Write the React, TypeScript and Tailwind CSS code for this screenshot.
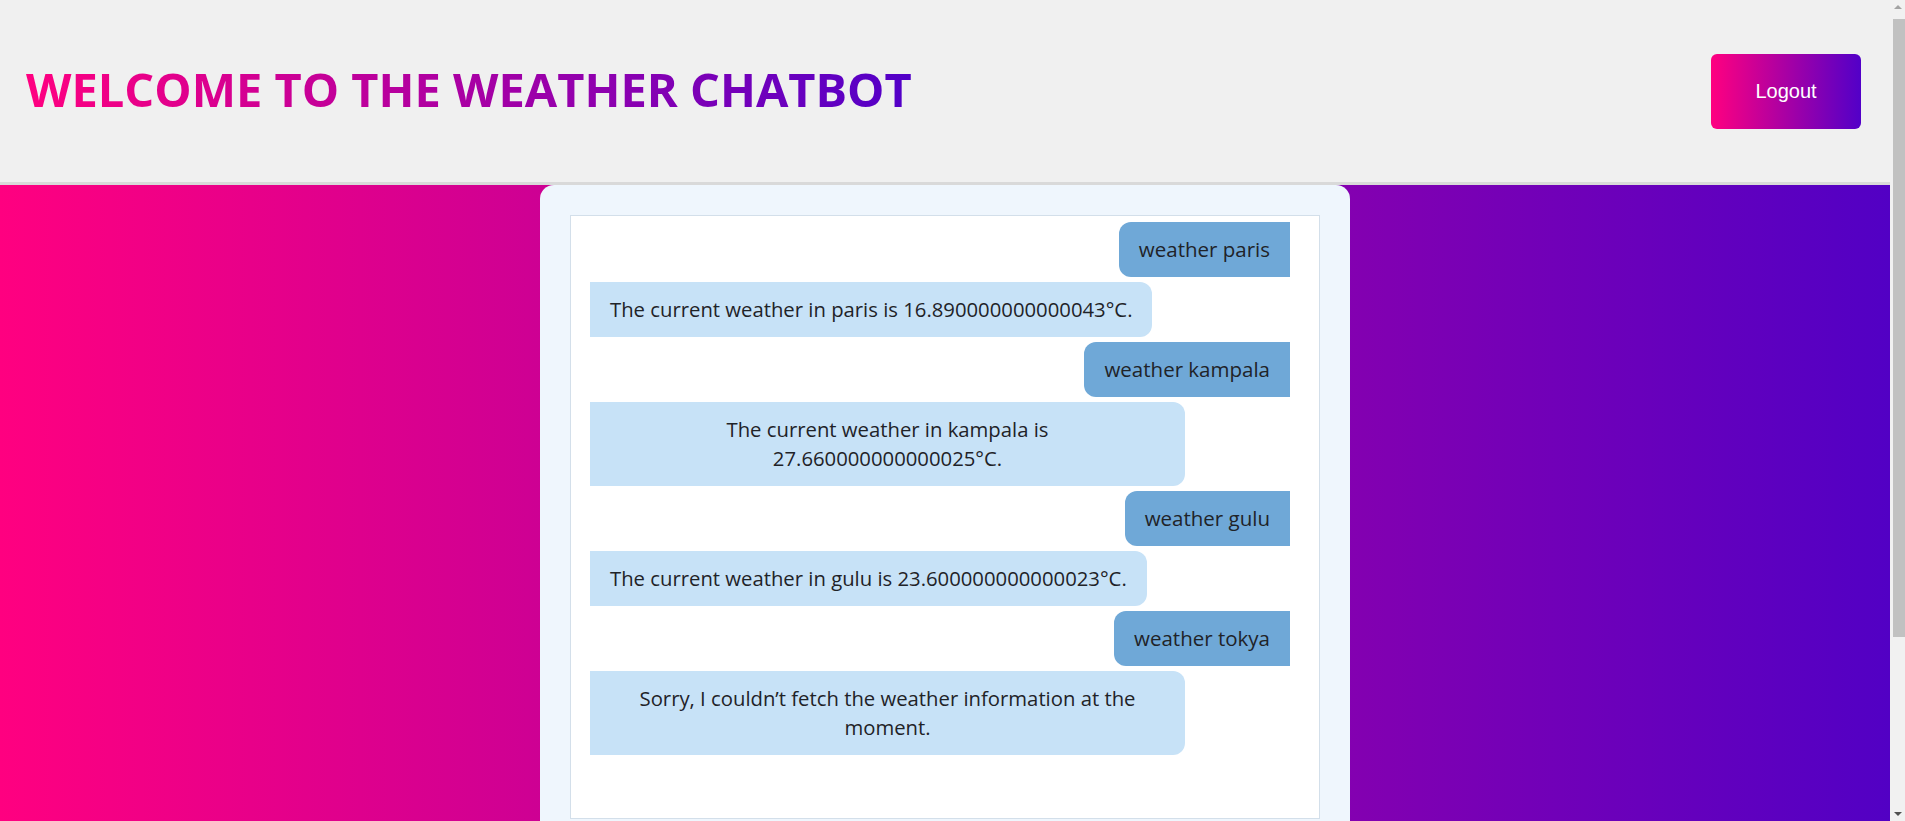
import React from "react";

type Msg = { from: "user" | "bot"; text: string };

const messages: Msg[] = [
  { from: "user", text: "weather paris" },
  { from: "bot", text: "The current weather in paris is 16.890000000000043°C." },
  { from: "user", text: "weather kampala" },
  { from: "bot", text: "The current weather in kampala is 27.660000000000025°C." },
  { from: "user", text: "weather gulu" },
  { from: "bot", text: "The current weather in gulu is 23.600000000000023°C." },
  { from: "user", text: "weather tokya" },
  { from: "bot", text: "Sorry, I couldn’t fetch the weather information at the moment." },
];

function Bubble({ msg }: { msg: Msg }) {
  if (msg.from === "user") {
    return (
      <div className="flex justify-end">
        <p className="my-[2.5px] rounded-l-[12px] bg-[#6fa8d7] px-[20px] py-[13px] text-[20.5px] leading-[29px] text-[#1f2328]">
          {msg.text}
        </p>
      </div>
    );
  }
  return (
    <div className="flex justify-start">
      <p className="my-[2.5px] max-w-[595px] rounded-r-[12px] bg-[#c7e2f7] px-[20px] py-[13px] text-center text-[20.3px] leading-[29px] text-[#1f2328]">
        {msg.text}
      </p>
    </div>
  );
}

// window scrollbar as it shows in the screenshot
function ScrollStrip() {
  return (
    <div className="flex w-[15px] shrink-0 flex-col bg-[#f1f1f1]">
      <div className="flex h-[19px] justify-center pt-[5px]">
        <div className="h-0 w-0 border-x-[4px] border-b-[4px] border-x-transparent border-b-[#a3a3a3]" />
      </div>
      <div className="ml-[3px] h-[618px] bg-[#c1c1c1]" />
      <div className="flex flex-1 items-end justify-center pb-[5px]">
        <div className="h-0 w-0 border-x-[4px] border-t-[4px] border-x-transparent border-t-[#505050]" />
      </div>
    </div>
  );
}

export default function App() {
  return (
    <div className="flex h-screen overflow-hidden font-['Open_Sans','Noto_Sans',sans-serif]">
      <div className="flex-1 overflow-y-auto">
        <header className="flex h-[185px] items-center justify-between border-b-[3px] border-[#d9d9d9] bg-[#f0f0f0] pl-[26px] pr-[29px]">
          <h1 className="inline-block bg-[linear-gradient(to_right,#ff0080,#5200c8)] bg-clip-text pb-[4px] text-[47px] font-bold text-transparent">
            WELCOME TO THE WEATHER CHATBOT
          </h1>
          <button className="h-[75px] w-[150px] rounded-[6px] bg-[linear-gradient(to_right,#ff0080,#5200c8)] font-['Liberation_Sans',Arial,sans-serif] text-[20px] text-white">
            Logout
          </button>
        </header>

        <main className="flex justify-center bg-[linear-gradient(to_right,#ff0080,#5200c4)]">
          <section className="w-[810px] rounded-t-[14px] bg-[#eff6fd] p-[30px]">
            <div className="flex h-[604px] flex-col overflow-y-auto border border-[#d3dfea] bg-white pb-[5px] pl-[19px] pr-[29px] pt-[3px]">
              {messages.map((m, i) => (
                <Bubble key={i} msg={m} />
              ))}
            </div>
            <form className="mt-[20px] flex gap-[10px]" onSubmit={(e) => e.preventDefault()}>
              <input
                className="h-[50px] flex-1 rounded-[6px] border border-[#c9d6e2] bg-white px-[14px] text-[18px] outline-none"
                placeholder="Ask about the weather..."
              />
              <button className="h-[50px] w-[120px] rounded-[6px] bg-[linear-gradient(to_right,#ff0080,#5200c8)] font-['Liberation_Sans',Arial,sans-serif] text-[18px] text-white">
                Send
              </button>
            </form>
            <div className="h-[90px]" />
          </section>
        </main>
      </div>
      <ScrollStrip />
    </div>
  );
}
